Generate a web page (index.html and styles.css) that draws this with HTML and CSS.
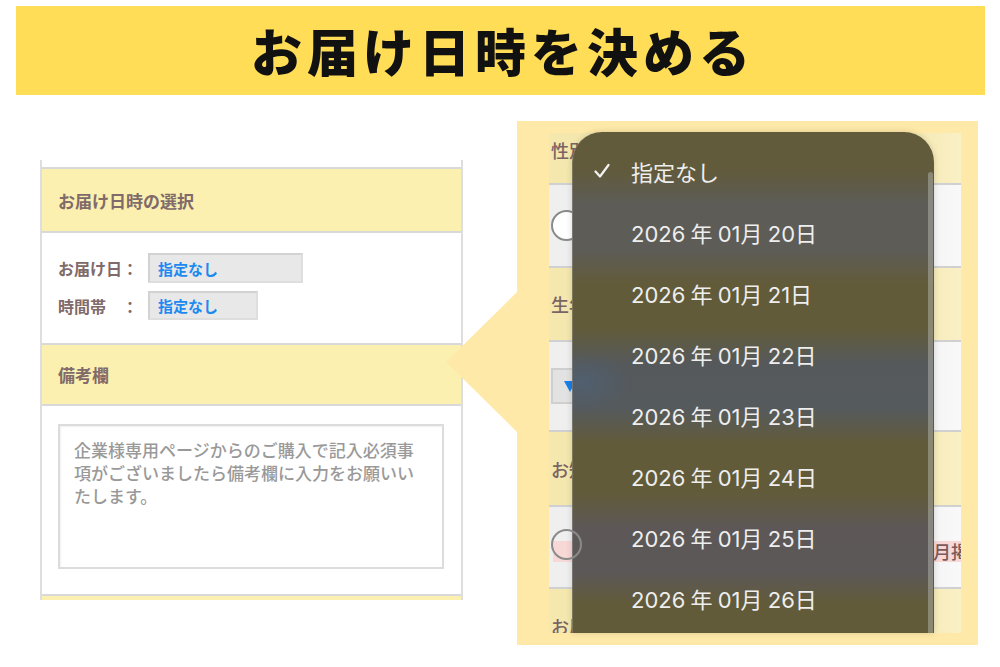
FILE: index.html
```html
<!DOCTYPE html>
<html lang="ja">
<head>
<meta charset="utf-8">
<title>お届け日時を決める</title>
<link rel="stylesheet" href="styles.css">
</head>
<body>
<div class="banner"><h1 class="title">お届け日時を決める</h1></div>
<div class="main">
  <div class="left">
    <div class="card">
      <div class="card-top"></div>
      <div class="sec-head head1">お届け日時の選択</div>
      <div class="sec-body body1">
        <div class="field"><span class="lbl">お届け日：</span><span class="sel w155">指定なし</span></div>
        <div class="field"><span class="lbl">時間帯　：</span><span class="sel w110">指定なし</span></div>
      </div>
      <div class="sec-head head2">備考欄</div>
      <div class="sec-body body2">
        <div class="textarea">企業様専用ページからのご購入で記入必須事<br>項がございましたら備考欄に入力をお願いい<br>たします。</div>
      </div>
      <div class="card-foot"></div>
    </div>
  </div>
  <div class="right">
    <div class="pointer"></div>
    <div class="form">
      <div class="frow yel r1"><span class="flbl">性別</span></div>
      <div class="frow wht r2"><span class="radio"></span></div>
      <div class="frow yel r3"><span class="flbl">生年月日</span></div>
      <div class="frow wht r4"><span class="fsel"><span class="arrow"></span></span></div>
      <div class="frow yel r5"><span class="flbl">お知らせ</span></div>
      <div class="frow wht r6"><span class="radio"></span><span class="pink">月掲載</span></div>
      <div class="frow yel r7"><span class="flbl">お届け</span></div>
    </div>
    <div class="popup">
      <ul class="opts">
        <li class="opt"><svg class="check" viewBox="0 0 16 16" width="16" height="16"><path d="M1.5 8.5 L6 13.5 L14.5 2" fill="none" stroke="#f2f2f2" stroke-width="2.2" stroke-linecap="round" stroke-linejoin="round"/></svg><span class="otext">指定なし</span></li>
        <li class="opt"><span class="otext">2026 年 01月 20日</span></li>
        <li class="opt"><span class="otext">2026 年 01月 21日</span></li>
        <li class="opt"><span class="otext">2026 年 01月 22日</span></li>
        <li class="opt"><span class="otext">2026 年 01月 23日</span></li>
        <li class="opt"><span class="otext">2026 年 01月 24日</span></li>
        <li class="opt"><span class="otext">2026 年 01月 25日</span></li>
        <li class="opt"><span class="otext">2026 年 01月 26日</span></li>
      </ul>
      <div class="scrollbar"></div>
    </div>
  </div>
</div>
</body>
</html>
```
FILE: styles.css
```css
* { box-sizing: border-box; }
html, body {
  margin: 0;
  padding: 0;
  background: #ffffff;
  width: 1000px;
  height: 667px;
  overflow: hidden;
  font-family: "Noto Sans CJK JP", "Noto Sans", sans-serif;
}

.banner {
  margin: 6px 15px 0 16px;
  height: 89px;
  background: #ffdd57;
  display: flex;
  align-items: center;
  justify-content: center;
}
.title {
  margin: 0;
  font-size: 51px;
  font-weight: 900;
  letter-spacing: 5px;
  color: #111;
  line-height: 1;
  padding-left: 5px;
}

.main {
  display: flex;
  align-items: flex-start;
  padding-left: 40px;
}

/* left card */
.left { margin-top: 65px; }
.card {
  width: 423px;
  border-left: 2px solid #dedede;
  border-right: 2px solid #dedede;
}
.card-top { height: 7px; background: #fff; }
.sec-head {
  background: #fbf0b0;
  border-top: 2px solid #d9d9d9;
  border-bottom: 2px solid #d9d9d9;
  display: flex;
  align-items: center;
  padding-left: 16px;
  font-size: 17px;
  font-weight: 700;
  color: #806a6a;
}
.head1 { height: 66px; }
.head2 { height: 63px; }
.sec-body { background: #fff; }
.body1 {
  height: 110px;
  padding: 20px 0 0 16px;
  display: flex;
  flex-direction: column;
  gap: 8px;
}
.field { display: flex; align-items: center; }
.lbl {
  width: 90px;
  font-size: 16px;
  font-weight: 700;
  color: #806a6a;
}
.sel {
  height: 30px;
  background: #e8e8e8;
  border: 2px solid #d2d2d2;
  border-right-color: #dedede;
  border-bottom-color: #dedede;
  display: flex;
  align-items: center;
  padding-left: 8px;
  font-size: 15px;
  font-weight: 700;
  color: #1d8af0;
}
.w155 { width: 155px; }
.w110 { width: 110px; height: 29px; }
.body2 {
  height: 188px;
  padding: 18px 0 0 16px;
}
.textarea {
  width: 386px;
  height: 145px;
  border: 2px solid #dcdcdc;
  box-shadow: inset 1px 1px 2px rgba(0,0,0,0.06);
  padding: 12px 10px 0 14px;
  font-size: 17px;
  font-weight: 500;
  line-height: 23px;
  color: #999999;
}
.card-foot {
  height: 6px;
  border-top: 2px solid #d9d9d9;
  background: #fbf0b0;
}

/* right panel */
.right {
  position: relative;
  margin-top: 26px;
  margin-left: 54px;
  width: 461px;
  height: 524px;
  background: #ffe9a8;
  padding: 12px 17px 12px 32px;
}
.pointer {
  position: absolute;
  left: -71px;
  top: 170px;
  width: 72px;
  height: 142px;
  background: #ffe9a8;
  clip-path: polygon(100% 0, 0 50%, 100% 100%);
}
.form {
  width: 412px;
  height: 500px;
  overflow: hidden;
  display: flex;
  flex-direction: column;
}
.frow {
  flex: none;
  display: flex;
  align-items: center;
  border-bottom: 2px solid #d0d0d0;
  padding-left: 2px;
  overflow: hidden;
}
.yel { background: linear-gradient(to right, #f4e8af 0%, #f1e3a3 80%, #f9f0c6 100%); }
.wht { background: linear-gradient(to right, #efefef 0%, #ececec 80%, #f9f9f9 100%); }
.r1 { height: 52px; align-items: flex-start; padding-top: 4px; }
.r2 { height: 83px; }
.r3 { height: 74px; }
.r4 { height: 90px; }
.r5 { height: 75px; }
.r6 { height: 82px; }
.r7 { height: 74px; border-bottom: none; }
.flbl {
  font-size: 18px;
  font-weight: 500;
  color: #7b6464;
  white-space: nowrap;
}
.radio {
  flex: none;
  width: 31px;
  height: 31px;
  border-radius: 50%;
  border: 2px solid #8a8a8a;
  background: #fff;
}
.fsel {
  flex: none;
  width: 90px;
  height: 36px;
  background: #e2e2e2;
  border: 2px solid #cfcfcf;
  position: relative;
}
.arrow {
  position: absolute;
  left: 11px;
  top: 11px;
  width: 0;
  height: 0;
  border-left: 6px solid transparent;
  border-right: 6px solid transparent;
  border-top: 11px solid #1a7fe8;
}
.pink {
  flex: none;
  margin-left: -29px;
  margin-top: 8px;
  width: 460px;
  height: 21px;
  background: #f7d8d6;
  font-size: 18px;
  font-weight: 500;
  line-height: 21px;
  color: #7b5a5a;
  text-align: right;
  white-space: nowrap;
  overflow: hidden;
  padding-right: 26px;
}
.r6 .radio { position: relative; z-index: 1; background: transparent; margin-top: -6px; }

/* popup */
.popup {
  position: absolute;
  left: 55px;
  top: 11px;
  width: 362px;
  height: 501px;
  border-radius: 30px 30px 0 0;
  overflow: hidden;
  border-left: 1px solid rgba(255,255,255,0.18);
  background:
    radial-gradient(ellipse 50px 30px at 8px 250px, rgba(60,120,200,0.18), rgba(60,120,200,0) 100%),
    linear-gradient(to bottom,
      #615a3b 0px, #615a3b 38px,
      #5d5c57 72px, #5d5c57 118px,
      #625b3a 152px, #625b3a 196px,
      #55595b 232px, #555a5d 276px,
      #625b3a 312px, #625b3a 360px,
      #5d5857 396px, #5c5858 440px,
      #625b3a 472px, #625b3a 501px);
  box-shadow: 0 0 6px rgba(0,0,0,0.15);
}
.opts {
  list-style: none;
  margin: 0;
  padding: 8px 0 0 0;
}
.opt {
  height: 61px;
  display: flex;
  align-items: center;
  position: relative;
  padding-left: 58px;
}
.check {
  position: absolute;
  left: 21px;
  top: 23px;
}
.otext {
  font-family: "Inter", "Noto Sans CJK JP", sans-serif;
  font-size: 22px;
  color: #eeeeee;
  white-space: nowrap;
  word-spacing: -1px;
}
.scrollbar {
  position: absolute;
  left: 355px;
  top: 40px;
  bottom: 0;
  width: 5px;
  border-radius: 3px 3px 0 0;
  background: rgba(190,190,185,0.45);
}
```
